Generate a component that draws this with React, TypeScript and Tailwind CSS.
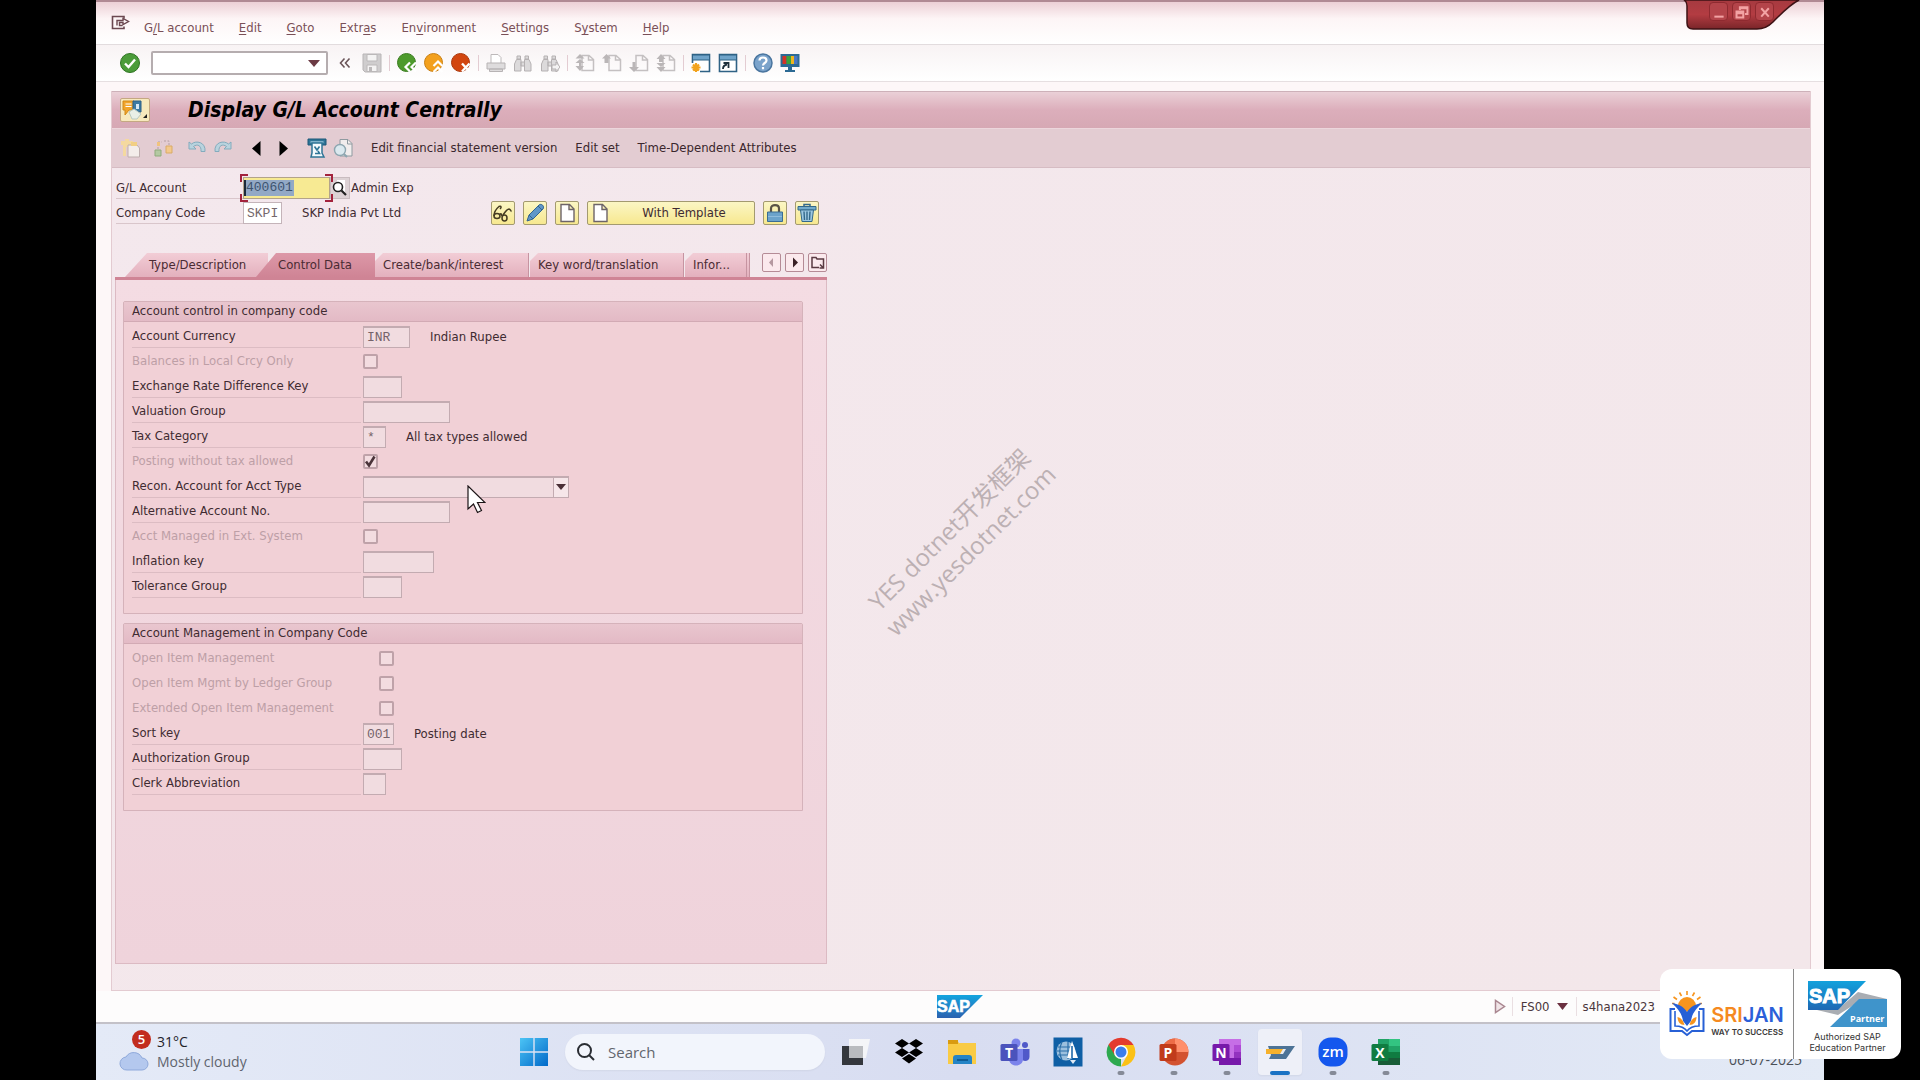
import type { ReactNode } from "react";

type IconProps = { children: ReactNode; size?: number; className?: string };

function Icon({ children, size = 20, className = "" }: IconProps) {
  return (
    <svg aria-hidden="true" className={`shrink-0 ${className}`} width={size} height={size} viewBox="0 0 20 20" fill="none">
      {children}
    </svg>
  );
}

function ToolButton({ label, disabled, children }: { label: string; disabled?: boolean; children: ReactNode }) {
  return (
    <button aria-label={label} className="shrink-0" disabled={disabled} type="button">
      <Icon>{children}</Icon>
    </button>
  );
}

const Separator = () => <span className="h-4 w-px shrink-0 bg-[#e3ccd2]" />;

/* ---------- menu bar ---------- */

const menus: [string, string, string][] = [
  ["G", "/", "L account"],
  ["", "E", "dit"],
  ["", "G", "oto"],
  ["Extr", "a", "s"],
  ["En", "v", "ironment"],
  ["", "S", "ettings"],
  ["S", "y", "stem"],
  ["", "H", "elp"],
];

function MenuBar() {
  return (
    <nav className="flex h-[45px] items-center border-t-2 border-b border-t-[#b08a94] border-b-[#e2dcde] bg-linear-to-b from-[#ecd0d6] via-[#fdf5f6] via-40% to-white pt-2.5 pl-[15px] text-[13px] text-[#7a4f57]">
      <svg aria-hidden="true" className="mb-2.5 mr-[13px] h-4 w-5" viewBox="0 0 20 16" fill="none" stroke="#6b4850" strokeWidth="1.6">
        <path d="M13 3.500V1.500H1.500v12H13v-2" />
        <path d="M6 10.500V5.500h6V3.500l5.500 3-5.500 3V7.500H8.500v3h3" fill="none" strokeWidth="1.400" />
      </svg>
      <div className="flex gap-[25px]">
        {menus.map(([before, key, after]) => (
          <button key={before + key + after} type="button">
            {before}
            <span className="underline underline-offset-2">{key}</span>
            {after}
          </button>
        ))}
      </div>
    </nav>
  );
}

function WindowControls() {
  return (
    <div className="absolute top-0 right-[24px] h-8 w-[117px]">
      <svg aria-hidden="true" className="absolute inset-0" width="117" height="32" viewBox="0 0 117 32">
        <defs>
          <linearGradient id="controls" x1="0" y1="0" x2="0" y2="1">
            <stop offset="0" stopColor="#a63a40" />
            <stop offset="0.5" stopColor="#b33c42" />
            <stop offset="1" stopColor="#7a2529" />
          </linearGradient>
        </defs>
        <path d="M1 0h115c-10 5-18 14-26 22-5 5-9 7-16 7H10c-4 0-6-2-6-6V6c0-3-1-5-3-6z" fill="url(#controls)" stroke="#3d1215" strokeWidth="1.500" />
      </svg>
      <div className="relative flex gap-1 pt-[2px] pl-[26px]">
        {[
          ["Minimize", "M4 15h11"],
          ["Restore", "M3 9h8v7H3zM3 11h8M7 7V4h9v8h-3M7 5h9"],
          ["Close", "M5 5l9 10M14 5l-9 10"],
        ].map(([label, d]) => (
          <button aria-label={label} className="flex h-[19px] w-[19px] items-center justify-center rounded-sm border border-[#8f2a30] bg-[#b4444a]" key={label} type="button">
            <svg className="h-4 w-4" viewBox="0 0 19 19" fill="none" stroke="#f3a3a4" strokeWidth="2.400">
              <path d={d} />
            </svg>
          </button>
        ))}
      </div>
    </div>
  );
}

/* ---------- system toolbar ---------- */

const sheet = <path d="M7 2.500h7l4.500 4V17.500H7zM13.500 2.500V7h5" stroke="#c4c0c1" strokeWidth="1.500" />;
const binoculars = (
  <path d="M4 3h3.500v3H4zM12 3h3.500v3H12zM3.500 6.500h4.500V18H1.500V11zM11.500 6.500H16l2 4.500v7h-6.500zM8 9h3.500v4H8z" fill="#dcdadb" stroke="#b5b1b2" />
);

function SystemToolbar() {
  return (
    <div className="flex h-[37px] items-center gap-[7px] border-b border-[#e6dfe1] bg-linear-to-b from-[#f8f3f4] to-white pl-6">
      <ToolButton label="Enter">
        <circle cx="10" cy="10" r="9.500" fill="#4b9c3a" stroke="#2f7423" />
        <path d="M5 10.500l3.500 3.500L15 6.500" stroke="#fff" strokeWidth="2.400" />
      </ToolButton>
      <div className="ml-1 flex h-6 w-[177px] items-center rounded-xs border-2 border-[#b5adaf] bg-white">
        <input aria-label="Command field" className="h-full w-0 grow outline-none" />
        <button aria-label="Command history" className="px-1.5" type="button">
          <svg width="12" height="7" viewBox="0 0 12 7">
            <path d="M0 0h12L6 7z" fill="#6b3a44" />
          </svg>
        </button>
      </div>
      <button aria-label="Hide command field" className="mx-1" type="button">
        <svg className="h-4 w-3" viewBox="0 0 12 16" fill="none" stroke="#6b5559" strokeWidth="1.600">
          <path d="M5.500 3.500L1.500 8l4 4.500M10.500 3.500L6.500 8l4 4.500" />
        </svg>
      </button>
      <ToolButton disabled label="Save">
        <path d="M1 1h18v18H3l-2-2z" fill="#cfcdce" stroke="#b8b5b6" />
        <path d="M5 1.500h10V8H5zM5 12h10v6.500H5z" fill="#f4f3f3" stroke="#bbb8b9" />
        <path d="M7 14h3v4H7z" fill="#bbb8b9" />
      </ToolButton>
      <Separator />
      <ToolButton label="Back">
        <circle cx="9.500" cy="9.500" r="9" fill="#4d9a2c" stroke="#3c7d22" />
        <path d="M13 9.500L8.500 14l4.500 4.500M19 9.500L14.500 14l4.500 4.500" stroke="#fff" strokeWidth="2.200" />
      </ToolButton>
      <ToolButton label="Exit">
        <circle cx="9.500" cy="9.500" r="9" fill="#f3a01d" stroke="#c97f12" />
        <path d="M9.500 13l4.500-4.500L18.500 13M9.500 19l4.500-4.500L18.500 19" stroke="#fff" strokeWidth="2.200" />
      </ToolButton>
      <ToolButton label="Cancel">
        <circle cx="9.500" cy="9.500" r="9" fill="#d2460f" stroke="#ab380c" />
        <path d="M11 10.500l7.500 8M18.500 10.500l-7.500 8" stroke="#fff" strokeWidth="2.400" />
      </ToolButton>
      <Separator />
      <ToolButton disabled label="Print">
        <path d="M5 10V1.500h7l3 3V10" fill="#fff" stroke="#bdb9ba" />
        <path d="M1 10h18v6H1zM3.500 16h13v2.500h-13z" fill="#dedcdd" stroke="#b7b3b4" />
      </ToolButton>
      <ToolButton disabled label="Find">{binoculars}</ToolButton>
      <ToolButton disabled label="Find next">
        {binoculars}
        <path d="M12 12h4V9l4 5-4 5v-3h-4z" fill="#f4f3f3" stroke="#b5b1b2" />
      </ToolButton>
      <Separator />
      <ToolButton disabled label="First page">
        {sheet}
        <path d="M5 1l4.500 4.500h-9zM5 6l4.500 4h-9zM4 10h2v3h3L5 18l-4.500-5H4z" fill="#bab6b7" />
      </ToolButton>
      <ToolButton disabled label="Previous page">
        {sheet}
        <path d="M4.500 1L9 5.500H6.500V10h-4V5.500H0z" fill="#bab6b7" />
      </ToolButton>
      <ToolButton disabled label="Next page">
        {sheet}
        <path d="M3.500 9h3v5H10l-5 5-5-5h3.500z" fill="#bab6b7" />
      </ToolButton>
      <ToolButton disabled label="Last page">
        {sheet}
        <path d="M5 1l4.500 5H7v3H3V6H.5zM.5 10h9L5 14zM.5 14h9L5 19z" fill="#bab6b7" />
      </ToolButton>
      <Separator />
      <ToolButton label="New session">
        <path d="M1.500 1.500h17v17h-17z" fill="#fff" stroke="#2f6285" strokeWidth="1.600" />
        <path d="M1.500 2h17v5h-17z" fill="#6fa3c9" stroke="#2f6285" />
        <path d="M0 10h9v10H0z" fill="#fff" />
        <path d="M5 10v9M.5 14.500h9M2 11.500l6 6M8 11.500l-6 6" stroke="#f2a21c" strokeWidth="2.200" />
      </ToolButton>
      <ToolButton label="Create shortcut">
        <path d="M1.500 1.500h17v17h-17z" fill="#fff" stroke="#2f6285" strokeWidth="1.600" />
        <path d="M1.500 2h17v5h-17z" fill="#6fa3c9" stroke="#2f6285" />
        <path d="M5 16c0-3 1-4 4-4.500M5.500 10h5v5" stroke="#1d2f3b" strokeWidth="1.800" />
      </ToolButton>
      <Separator />
      <ToolButton label="Help">
        <circle cx="10" cy="10" r="9" fill="#7ba3cb" stroke="#4a759f" strokeWidth="1.500" />
        <path d="M6.500 7.500C6.500 3.500 13.500 3.500 13.500 7.500c0 2.500-3.500 2.500-3.500 5M10 14v2.200" stroke="#fff" strokeWidth="2.200" />
      </ToolButton>
      <ToolButton label="Customize layout">
        <path d="M.5 1h19v13H.5zM8 14h4v3h3v2H5v-2h3z" fill="#2c6a94" />
        <path d="M2.500 3h4v8h-4z" fill="#d43327" />
        <path d="M6.500 3h4.500v8H6.500z" fill="#3ba23c" />
        <path d="M11 3h3v8h-3z" fill="#f0b51f" />
        <path d="M14 3h3.500v8H14z" fill="#4a78c4" />
      </ToolButton>
    </div>
  );
}

/* ---------- application header ---------- */

function TitleBar() {
  return (
    <header className="flex h-[37px] items-center border-t border-[#cdb1b9] bg-linear-to-b from-[#ead0d7] via-[#dcaebb] via-50% to-[#d6a8b4] pl-2">
      <button aria-label="Services for object" className="flex h-6 w-[30px] items-center justify-center rounded-xs border border-[#c4a882] bg-[#f7e9bd]" type="button">
        <svg width="28" height="22" viewBox="0 0 28 22">
          <path d="M2 2h11v9H8l-4 5v-5H2z" fill="#f2a52b" stroke="#d28a17" />
          <path d="M4.500 5h6M4.500 7.500h6" stroke="#fff" />
          <path d="M12 2h8v11h-8z" fill="#3c7aa3" stroke="#2c5f85" />
          <path d="M15 5h3v5h-3z" fill="#d7e8f4" />
          <path d="M8 13l5-3 7 5-4 5h-5z" fill="#e9efe6" stroke="#b9c9c0" />
          <path d="M26 15v4h-4z" fill="#222" />
        </svg>
      </button>
      <h1 className="ml-[38px] text-[21px] leading-6 font-bold italic text-black">Display G/L Account Centrally</h1>
    </header>
  );
}

function ApplicationToolbar() {
  return (
    <div className="flex h-10 items-center gap-1.5 border-t border-b border-t-[#ecd6dc] border-b-[#d6bcc3] bg-[#e3ccd2] pl-[9px] text-[13px] text-[#3a262c]">
      <ToolButton disabled label="Other object">
        <path d="M0 3h4V1h4v2h4v6H5v9H2V7H0z" fill="#f4d9a0" />
        <path d="M7 7h9l2.500 3v9H7z" fill="#f4edea" stroke="#bfaeae" />
        <path d="M10 4h6v4h-6z" fill="#f2cf84" />
      </ToolButton>
      <Separator />
      <ToolButton disabled label="Hierarchy">
        <path d="M1 12h6v6H1z" fill="#b4c9a2" stroke="#8fab7c" />
        <path d="M12 8h6v7h-6z" fill="#f4c98b" stroke="#d9ab66" />
        <path d="M4 11V4h4M10 3h5v4" stroke="#b49fa3" strokeDasharray="2 1.500" />
        <path d="M3 4h3v4H3z" fill="#f0c37e" />
      </ToolButton>
      <Separator />
      <ToolButton disabled label="Undo">
        <path d="M2 4v7h7l-2.500-2.500c4-3 8-1 7.500 5h4C19 4 9 2 4.500 6z" fill="#b9d3de" stroke="#83abbd" />
      </ToolButton>
      <ToolButton disabled label="Redo">
        <path d="M18 4v7h-7l2.500-2.500c-4-3-8-1-7.500 5H2C1 4 11 2 15.500 6z" fill="#b9d3de" stroke="#83abbd" />
      </ToolButton>
      <Separator />
      <button aria-label="Previous account" className="flex w-[21px] justify-center" type="button">
        <svg width="9" height="15" viewBox="0 0 9 15"><path d="M8.500 0v15L0 7.500z" /></svg>
      </button>
      <button aria-label="Next account" className="flex w-[21px] justify-center" type="button">
        <svg width="9" height="15" viewBox="0 0 9 15"><path d="M.5 0v15L9 7.500z" /></svg>
      </button>
      <Separator />
      <ToolButton label="Change documents">
        <path d="M1 1h18v6H1z" fill="#2f7597" stroke="#1d5878" />
        <path d="M3.500 4h13" stroke="#9cc7dc" strokeWidth="1.500" />
        <path d="M5 5h10v10l2 4H4l1-4z" fill="#f4fafd" stroke="#2f7597" strokeWidth="1.500" />
        <path d="M7.500 8.500L10 12l2.500-3.500M8 15.500h4.500l-1.500-2.500" stroke="#2f7597" strokeWidth="1.600" />
      </ToolButton>
      <ToolButton label="Where-used list">
        <path d="M7 1.500h8l4 4V18H7z" fill="#f1eded" stroke="#8f9aa0" />
        <path d="M14.500 1.500V6H19" stroke="#8f9aa0" />
        <circle cx="7" cy="12" r="5.500" fill="#dbe9ef" stroke="#8da6b0" strokeWidth="1.400" />
        <path d="M11 16l3 3" stroke="#8da6b0" strokeWidth="2" />
      </ToolButton>
      <div className="ml-3 flex gap-[18px]">
        <button type="button">Edit financial statement version</button>
        <button type="button">Edit set</button>
        <button type="button">Time-Dependent Attributes</button>
      </div>
    </div>
  );
}

/* ---------- account selection ---------- */

const yellowButton = "flex h-6 items-center rounded-xs border border-[#a39a70] bg-linear-to-b from-[#fbf6c4] to-[#f7e88f]";

const page = <path d="M4 1.500h8.500L17 6v12.500H4zM12 1.500V6.500h5" fill="#fff" stroke="#6d6468" strokeWidth="1.400" />;

function AccountSelection() {
  return (
    <section className="flex pt-[9px] pl-1 text-[13px] text-[#3f2b31]">
      <div className="w-[375px]">
        <div className="flex h-[25px] items-start">
          <label className="h-[22px] w-[127px] border-b border-[#d9c6cb] leading-[22px]" htmlFor="gl">G/L Account</label>
          <div className="relative flex h-[22px] w-[87px] items-center border border-[#b3a38a] bg-[#f7ea93]">
            <input
              className="w-[50px] border-l-2 border-[#1c2a3a] bg-[#93a9c6] font-['Liberation_Mono',monospace] leading-4 text-[#3d5470] outline-none"
              defaultValue="400601"
              id="gl"
            />
            <span className="absolute -top-1 -left-1 h-2 w-2 border-t-2 border-l-2 border-[#a3233d]" />
            <span className="absolute -bottom-1 -left-1 h-2 w-2 border-b-2 border-l-2 border-[#a3233d]" />
            <span className="absolute -top-1 -right-1 h-2 w-2 border-t-2 border-r-2 border-[#a3233d]" />
            <span className="absolute -right-1 -bottom-1 h-2 w-2 border-r-2 border-b-2 border-[#a3233d]" />
          </div>
          <button aria-label="Search help" className="flex h-[22px] w-[20px] items-center justify-center border border-[#c9bcc0] bg-[#ddd2d5]" type="button">
            <svg width="18" height="18" viewBox="0 0 18 18" fill="none">
              <path d="M6 1h8v12H6z" fill="#fff" />
              <circle cx="7" cy="8" r="4.500" fill="#fff" stroke="#222" strokeWidth="1.600" />
              <path d="M10.500 11.500L15 16" stroke="#222" strokeWidth="2.200" />
            </svg>
          </button>
          <span className="ml-px leading-[22px]">Admin Exp</span>
        </div>
        <div className="flex h-[25px] items-start">
          <label className="h-[22px] w-[127px] border-b border-[#d9c6cb] leading-[22px]" htmlFor="company">Company Code</label>
          <input
            className="h-[22px] w-[39px] border border-[#c4b4b9] bg-white px-[3px] font-['Liberation_Mono',monospace] text-[#75686c]"
            defaultValue="SKPI"
            id="company"
            readOnly
          />
          <span className="ml-[20px] leading-[22px]">SKP India Pvt Ltd</span>
        </div>
      </div>
      <div className="flex items-end gap-2 pb-0.5">
        <button aria-label="Display" className={`${yellowButton} w-6 justify-center`} type="button">
          <Icon>
            <path d="M1 13C1 8 3 6 6 3.500 8 2.500 9 4.500 7 6" stroke="#453c22" strokeWidth="1.500" />
            <path d="M10 12c2-3 4-6 6-6 2 .5 1.500 2 2.500 2.500" stroke="#453c22" strokeWidth="1.500" />
            <ellipse cx="4" cy="13" rx="3" ry="2.500" stroke="#453c22" strokeWidth="1.500" />
            <ellipse cx="11.500" cy="15" rx="2.500" ry="3" stroke="#453c22" strokeWidth="1.500" />
            <path d="M6.500 12c1-2 2-1.500 2.500 1" stroke="#453c22" strokeWidth="1.500" />
          </Icon>
        </button>
        <button aria-label="Change" className={`${yellowButton} w-6 justify-center`} type="button">
          <Icon>
            <path d="M2 18l2-6L14 2c2-2 6 1 4 4L8 16z" fill="#5f96c8" stroke="#33648f" />
            <path d="M4 12l4 4M13 3l4 4" stroke="#33648f" />
          </Icon>
        </button>
        <button aria-label="Create" className={`${yellowButton} w-6 justify-center`} type="button">
          <Icon>{page}</Icon>
        </button>
        <button className={`${yellowButton} w-[168px] pl-0.5`} type="button">
          <Icon>{page}</Icon>
          <span className="grow pl-1 text-center">With Template</span>
        </button>
        <button aria-label="Lock" className={`${yellowButton} w-6 justify-center`} type="button">
          <Icon>
            <path d="M6 9V5.500C6 1 14 1 14 5.500V9" stroke="#5a5346" strokeWidth="2.200" />
            <path d="M2.500 9h15v9.500h-15z" fill="#6ba3cb" stroke="#3a6d94" />
            <path d="M3 13.500h14" stroke="#8fbcdc" />
          </Icon>
        </button>
        <button aria-label="Delete" className={`${yellowButton} w-6 justify-center`} type="button">
          <Icon>
            <path d="M7 3V1.500h6V3" stroke="#32688a" strokeWidth="1.500" />
            <path d="M1 3.500h18V7H1z" fill="#72abcb" stroke="#32688a" />
            <path d="M3.500 7h13l-1.500 11.500H5z" fill="#9dc8e2" stroke="#32688a" />
            <path d="M7 8.500l.5 8.500M10 8.500V17M13 8.500l-.5 8.500" stroke="#32688a" strokeWidth="1.400" />
          </Icon>
        </button>
      </div>
    </section>
  );
}

/* ---------- tab strip ---------- */

const tabBase = "flex h-6 items-center pb-px whitespace-nowrap";
const tabIdle = "bg-linear-to-b from-[#f2cdd6] to-[#e3b0bd]";

function TabStrip() {
  return (
    <div className="flex items-start border-b-3 border-[#cf8495] text-[13px] text-[#4a2b33]" role="tablist">
      <button className={`${tabBase} ${tabIdle} ml-[10px] -mr-3 w-[143px] pl-6 [clip-path:polygon(22px_0,100%_0,100%_100%,0_100%)]`} role="tab" type="button">
        Type/Description
      </button>
      <button
        aria-selected="true"
        className={`${tabBase} z-10 w-[119px] bg-linear-to-b from-[#dd98a8] to-[#cf8495] pl-[22px] [clip-path:polygon(20px_0,100%_0,100%_100%,0_100%)]`}
        role="tab"
        type="button"
      >
        Control Data
      </button>
      <button className={`${tabBase} ${tabIdle} w-[154px] border-r border-[#c694a1] pl-2 [clip-path:polygon(8px_0,100%_0,100%_100%,0_100%,0_8px)]`} role="tab" type="button">
        Create/bank/interest
      </button>
      <button className={`${tabBase} ${tabIdle} ml-px w-[154px] border-r border-[#c694a1] pl-2 [clip-path:polygon(8px_0,100%_0,100%_100%,0_100%,0_8px)]`} role="tab" type="button">
        Key word/translation
      </button>
      <button className={`${tabBase} ${tabIdle} ml-px w-[65px] border-r-4 border-double border-[#c694a1] pl-2 [clip-path:polygon(8px_0,100%_0,100%_100%,0_100%,0_8px)]`} role="tab" type="button">
        Infor...
      </button>
      <div className="ml-auto flex gap-1">
        {[
          ["Scroll tabs left", "M10 4v9L6 8.500z", "fill-[#b598a0] stroke-none"],
          ["Scroll tabs right", "M7 3.500v10l5-5z", "fill-[#3a2026] stroke-none"],
          ["Tab list", "M10 13.500H3v-10h4l1 1.500h6.500v5M11 10.500l3 3M14.500 10v4h-4", "fill-none stroke-[#5a3a42]"],
        ].map(([label, d, paint]) => (
          <button aria-label={label} className="h-[19px] w-[19px] rounded-xs border border-[#b58b96] bg-[#fbe9ed]" key={label} type="button">
            <svg className={paint} width="17" height="17" viewBox="0 0 17 17" strokeWidth="1.500">
              <path d={d} />
            </svg>
          </button>
        ))}
      </div>
    </div>
  );
}

/* ---------- field groups ---------- */

type Field = {
  label: string;
  kind?: "text" | "check" | "select";
  width?: string;
  value?: string;
  checked?: boolean;
  indent?: boolean;
  note?: string;
};

const controlFields: Field[] = [
  { label: "Account Currency", width: "w-[47px]", value: "INR", note: "Indian Rupee" },
  { label: "Balances in Local Crcy Only", kind: "check" },
  { label: "Exchange Rate Difference Key", width: "w-[39px]" },
  { label: "Valuation Group", width: "w-[87px]" },
  { label: "Tax Category", width: "w-[23px]", value: "*", note: "All tax types allowed" },
  { label: "Posting without tax allowed", kind: "check", checked: true },
  { label: "Recon. Account for Acct Type", kind: "select" },
  { label: "Alternative Account No.", width: "w-[87px]" },
  { label: "Acct Managed in Ext. System", kind: "check" },
  { label: "Inflation key", width: "w-[71px]" },
  { label: "Tolerance Group", width: "w-[39px]" },
];

const managementFields: Field[] = [
  { label: "Open Item Management", kind: "check", indent: true },
  { label: "Open Item Mgmt by Ledger Group", kind: "check", indent: true },
  { label: "Extended Open Item Management", kind: "check", indent: true },
  { label: "Sort key", width: "w-[31px]", value: "001", note: "Posting date" },
  { label: "Authorization Group", width: "w-[39px]" },
  { label: "Clerk Abbreviation", width: "w-[23px]" },
];

function FieldRow({ field }: { field: Field }) {
  const id = field.label.toLowerCase().replace(/[^a-z]+/g, "-");
  const isCheck = field.kind === "check";

  return (
    <div className="flex h-[25px] items-center">
      <label
        className={`mr-0.5 h-[23px] w-[229px] leading-[22px] ${isCheck ? "text-[#bd9fa6]" : "border-b border-[#dcbcc3]"}`}
        htmlFor={id}
      >
        {field.label}
      </label>
      {isCheck ? (
        <span className={`relative h-[15px] w-[15px] ${field.indent ? "ml-4" : ""}`}>
          <input
            className="block h-[15px] w-[15px] appearance-none rounded-xs border-2 border-[#bfa2a9] bg-[#f3dce0]"
            defaultChecked={field.checked}
            disabled
            id={id}
            type="checkbox"
          />
          {field.checked && (
            <svg aria-hidden="true" className="absolute inset-0" width="15" height="15" viewBox="0 0 15 15" fill="none" stroke="#4a3339" strokeWidth="2.600">
              <path d="M3 7.500l3 4 5.500-9" />
            </svg>
          )}
        </span>
      ) : field.kind === "select" ? (
        <span className="relative flex h-[22px] w-[206px]">
          <select className="w-full appearance-none border border-t-2 border-[#c3abb1] bg-[#f1dce0]" id={id}>
            <option> </option>
          </select>
          <span className="pointer-events-none absolute top-0.5 right-px flex h-[19px] w-[15px] items-center justify-center border-l border-[#c3abb1] bg-[#f6e6e9]">
            <svg aria-hidden="true" width="10" height="6" viewBox="0 0 10 6"><path d="M0 0h10L5 6z" fill="#4a2f36" /></svg>
          </span>
        </span>
      ) : (
        <input
          className={`h-[22px] border border-t-2 border-[#c3abb1] bg-[#f1dce0] px-[3px] font-['Liberation_Mono',monospace] text-[#75636a] ${field.width}`}
          defaultValue={field.value}
          id={id}
          readOnly
        />
      )}
      {field.note && <span className="ml-5">{field.note}</span>}
    </div>
  );
}

function FieldGroup({ title, fields }: { title: string; fields: Field[] }) {
  return (
    <section className="rounded-t-xs border border-[#d5b2ba] bg-[#f1d0d6] pb-[14px] text-[13px] text-[#3f2b31]">
      <h2 className="h-5 border-b border-[#d2aab4] bg-linear-to-b from-[#e9c6cf] to-[#e3bac5] pl-2 leading-[18px]">{title}</h2>
      <div className="pt-[2px] pl-2">
        {fields.map((field) => (
          <FieldRow field={field} key={field.label} />
        ))}
      </div>
    </section>
  );
}

/* ---------- status bar ---------- */

function SapLogo({ id, width, height }: { id: string; width: number; height: number }) {
  return (
    <svg aria-label="SAP" role="img" width={width} height={height} viewBox="0 0 46 23">
      <defs>
        <linearGradient id={id} x1="0" y1="0" x2="0" y2="1">
          <stop offset="0" stopColor="#14a5df" />
          <stop offset="1" stopColor="#2c62b0" />
        </linearGradient>
      </defs>
      <path d="M0 0h46L23 23H0z" fill={`url(#${id})`} />
      <text x="0" y="17" fill="#fff" stroke="#fff" strokeWidth="0.600" className="font-['Liberation_Sans',sans-serif] text-[16px] font-bold">SAP</text>
    </svg>
  );
}

function StatusBar() {
  return (
    <footer className="flex h-[33px] items-center border-b-2 border-[#c3c1c8] bg-[#fdfcfc] text-[13px] text-[#4a363b]">
      <div className="flex-1" />
      <SapLogo height={23} id="sap-status" width={46} />
      <div className="flex flex-1 justify-end">
        <div className="mr-[169px] flex items-center">
          <svg aria-hidden="true" className="mr-1.5" width="12" height="15" viewBox="0 0 12 15"><path d="M1.500 1.500v12l9-6z" fill="#f0e4e7" stroke="#a98690" strokeWidth="1.500" /></svg>
          <button className="flex items-center gap-[7px] border-x border-[#eadfe2] px-2" type="button">
            FS00
            <svg width="11" height="7" viewBox="0 0 11 7"><path d="M0 0h11L5.500 7z" fill="#6b3040" /></svg>
          </button>
          <span className="pl-1.5">s4hana2023</span>
        </div>
      </div>
    </footer>
  );
}

/* ---------- taskbar ---------- */

function OfficeTile({ letter, tile, children }: { letter: string; tile: string; children: ReactNode }) {
  return (
    <svg width="30" height="30" viewBox="0 0 30 30">
      {children}
      <rect x="0.500" y="7" width="17" height="17" rx="1.500" fill={tile} />
      <text x="9" y="20.500" textAnchor="middle" fill="#fff" className="text-[14px] font-bold">{letter}</text>
    </svg>
  );
}

const apps: { name: string; state?: "open" | "active"; icon: ReactNode }[] = [
  {
    name: "Task view",
    icon: (
      <svg width="30" height="30" viewBox="0 0 30 30">
        <path d="M1 9h21v19H1z" fill="#34373d" />
        <path d="M8 2h21l-4 19H8z" fill="#f4f5f8" />
        <path d="M8 9h14v12H8z" fill="#b9bbbf" />
      </svg>
    ),
  },
  {
    name: "Dropbox",
    icon: (
      <svg width="30" height="30" viewBox="0 0 30 30">
        <path d="M8 2l7 4.500L8 11 1 6.500zM22 2l7 4.500-7 4.500-7-4.500zM8 11l7 4.500L8 20l-7-4.500zM22 11l7 4.500-7 4.500-7-4.500zM15 17l7 4.500-7 5-7-5z" />
      </svg>
    ),
  },
  {
    name: "File Explorer",
    icon: (
      <svg width="30" height="30" viewBox="0 0 30 30">
        <path d="M1 3h9l2 3h17v21H1z" fill="#f9cb45" />
        <path d="M1 3h10v4H1z" fill="#d99b10" />
        <path d="M6 27v-6c0-2 1-3 3-3h13c2 0 3 1 3 3v6z" fill="#2484c6" />
        <path d="M10 23h11" stroke="#0e5c95" strokeWidth="2" />
      </svg>
    ),
  },
  {
    name: "Teams",
    icon: (
      <OfficeTile letter="T" tile="#4b53bc">
        <circle cx="16" cy="6" r="4.500" fill="#7b83eb" />
        <circle cx="25" cy="8" r="3" fill="#5059c9" />
        <path d="M20 12h9.500v8c0 4-5 5-7 3z" fill="#5059c9" />
        <path d="M9 12h14v10c0 8-12 9-14 1z" fill="#7b83eb" />
      </OfficeTile>
    ),
  },
  {
    name: "Globe viewer",
    icon: (
      <svg width="30" height="30" viewBox="0 0 30 30" fill="none">
        <path d="M.5.500h29v29H.5z" fill="#0f5fa5" />
        <circle cx="13" cy="14" r="9.500" fill="#9cc0de" />
        <path d="M5 10h14M3.500 14h15M5 18h13M9 5c-3 6-3 12 0 18M15 5v17" stroke="#2a6ea8" strokeWidth="1.200" />
        <path d="M19 4l6 17H14z" fill="#fff" />
        <path d="M19 9v12" stroke="#0f5fa5" strokeWidth="1.500" />
        <path d="M17 23h6l-3 4z" fill="#dfeaf4" />
      </svg>
    ),
  },
  {
    name: "Chrome",
    state: "open",
    icon: (
      <svg width="30" height="30" viewBox="0 0 30 30">
        <path d="M15 15v14.500A14.500 14.500 0 0 1 2.500 7.800z" fill="#2da94f" />
        <path d="M15 8h12.600A14.500 14.500 0 0 0 2.500 7.800L9 18.500z" fill="#e33b2e" />
        <path d="M21 18.500L15 29.500A14.500 14.500 0 0 0 27.600 8H15z" fill="#fbc116" />
        <circle cx="15" cy="15" r="7" fill="#fff" />
        <circle cx="15" cy="15" r="5.500" fill="#3b7ded" />
      </svg>
    ),
  },
  {
    name: "PowerPoint",
    state: "open",
    icon: (
      <OfficeTile letter="P" tile="#c13b1b">
        <circle cx="16" cy="15" r="13.500" fill="#d35230" />
        <path d="M16 1.500A13.500 13.500 0 0 1 29.500 15H16z" fill="#ff8f6b" />
        <path d="M16 1.500V15H2.500A13.500 13.500 0 0 1 16 1.500z" fill="#ed6c47" />
      </OfficeTile>
    ),
  },
  {
    name: "OneNote",
    state: "open",
    icon: (
      <OfficeTile letter="N" tile="#7719aa">
        <path d="M7 2h22v26H7z" fill="#c66ee6" />
        <path d="M22 8h7v7h-7z" fill="#ae4bd5" />
        <path d="M22 15h7v6h-7z" fill="#9332bf" />
        <path d="M7 21h22v7H7z" fill="#7719aa" />
      </OfficeTile>
    ),
  },
  {
    name: "SAP Logon",
    state: "active",
    icon: (
      <svg width="30" height="30" viewBox="0 0 30 30">
        <path d="M3 9h27l-9 13H4l2-4z" fill="#4d7396" />
        <path d="M9 12h12l-3 5H9z" fill="#e9ecf2" />
        <path d="M1 12h17l-3 5H1z" fill="#f6b12c" />
      </svg>
    ),
  },
  {
    name: "Zoom",
    state: "open",
    icon: (
      <svg width="30" height="30" viewBox="0 0 30 30">
        <rect x="0.500" y="0.500" width="29" height="29" rx="12" fill="#1457ee" />
        <text x="15" y="20" textAnchor="middle" fill="#fff" className="text-[15px] font-semibold">zm</text>
      </svg>
    ),
  },
  {
    name: "Excel",
    state: "open",
    icon: (
      <OfficeTile letter="X" tile="#107c41">
        <path d="M7 2h22v26H7z" fill="#21a366" />
        <path d="M18 2h11v7H18z" fill="#33c481" />
        <path d="M7 15h22v7H7z" fill="#107c41" />
        <path d="M7 21h22v7H7z" fill="#185c37" />
      </OfficeTile>
    ),
  },
];

function Taskbar() {
  return (
    <div className="flex h-14 items-center bg-linear-to-r from-[#e4eaf7] via-[#d8ddf1] to-[#e3eaf6] pb-px font-['Open_Sans',sans-serif] text-[14px] leading-5">
      <div className="flex-1 pl-[22px]">
        <button className="flex text-left" type="button">
          <span className="relative h-10 w-[39px]">
            <svg className="absolute top-[18px] left-px" width="31" height="22" viewBox="0 0 31 22">
              <path d="M8 20a6.500 6.500 0 0 1-1-13A9 9 0 0 1 23 8a6 6 0 0 1 0 12z" fill="#b4c8ee" stroke="#8fa9db" />
            </svg>
            <span className="absolute -top-0.5 left-[14px] h-[19px] w-[19px] rounded-full bg-[#c22c1e] text-center text-[13px] leading-[19px] font-semibold text-white">5</span>
          </span>
          <span className="flex flex-col text-[#1f2329]">
            <span>31°C</span>
            <span className="text-[#5f656e]">Mostly cloudy</span>
          </span>
        </button>
      </div>
      <div className="flex items-center">
        <button aria-label="Start" className="mr-[9px] flex w-11 justify-center" type="button">
          <svg width="28" height="28" viewBox="0 0 28 28">
            <defs>
              <linearGradient id="start" x1="0" y1="0" x2="1" y2="1">
                <stop offset="0" stopColor="#4cc4f5" />
                <stop offset="1" stopColor="#0169c9" />
              </linearGradient>
            </defs>
            <path d="M0 0h13.300v13.300H0zM14.700 0H28v13.300H14.700zM0 14.700h13.300V28H0zM14.700 14.700H28V28H14.700z" fill="url(#start)" />
          </svg>
        </button>
        <label className="mr-[9px] flex h-9 w-[260px] items-center rounded-full bg-[#f2f5fc] pl-3 shadow-xs">
          <svg aria-hidden="true" width="18" height="18" viewBox="0 0 18 18" fill="none" stroke="#2a2d33" strokeWidth="2">
            <circle cx="7.500" cy="7.500" r="6.500" />
            <path d="M12 12l5 5" />
          </svg>
          <input aria-label="Search" className="ml-[13px] w-0 grow text-[15px] outline-none placeholder:text-[#62666e]" placeholder="Search" />
        </label>
        <div className="flex gap-[9px]">
          {apps.map(({ name, state, icon }) => (
            <button
              aria-label={name}
              className={`relative flex h-[46px] w-11 items-center justify-center rounded-sm ${state === "active" ? "bg-[#eef0f8] shadow-xs" : ""}`}
              key={name}
              type="button"
            >
              {icon}
              {state && (
                <span
                  className={`absolute bottom-0 left-1/2 h-1 -translate-x-1/2 rounded-full ${state === "active" ? "w-5 bg-[#1a72c4]" : "w-[7px] bg-[#858a97]"}`}
                />
              )}
            </button>
          ))}
        </div>
      </div>
      <div className="flex flex-1 flex-col items-end pt-4 pr-[22px] text-[#4a4f57]">06-07-2025</div>
    </div>
  );
}

/* ---------- overlays ---------- */

function PartnerBadge() {
  return (
    <aside className="absolute right-[19px] bottom-[21px] flex h-[90px] w-[241px] rounded-xl bg-white">
      <div className="flex w-[134px] items-center justify-center gap-1.5 border-r border-[#8a8a8a]">
        <svg aria-hidden="true" width="36" height="46" viewBox="0 0 36 46" fill="none">
          <path d="M9 15a9 9 0 0 1 18 0l-9 6z" fill="#f7941d" />
          <path d="M18 4V0M12.500 5l-2-3.500M23.500 5l2-3.500M8 8.500L4.500 6M28 8.500L31.500 6M5.500 12.500H3M30.500 12.500H33" stroke="#f7941d" strokeWidth="1.600" />
          <path d="M3 12c7 1 12 4 15 9 3-5 8-8 15-9-5 5-10 10-11 18l-4 5-4-5C13 22 8 17 3 12z" fill="#2760d6" />
          <path d="M6 18H1.500v22H13l5 4 5-4h11.500V18H30" stroke="#2760d6" strokeWidth="2" />
          <path d="M6 20v15c5 0 9 1 12 5 3-4 7-5 12-5V20" stroke="#2760d6" strokeWidth="1.600" />
          <path d="M8.500 26c4 1 6 4 7 8-4 0-7-3-7-8zM27.500 26c-4 1-6 4-7 8 4 0 7-3 7-8z" fill="#f7941d" />
        </svg>
        <div className="pt-3">
          <p className="font-['Inter',sans-serif] text-[20px] leading-6 font-semibold text-[#2b5fd9]">
            <span className="text-[#f58a1f]">SRI</span>JAN
          </p>
          <p className="font-['Inter',sans-serif] text-[8px] leading-[10px] font-semibold text-[#3a3a3a]">WAY TO SUCCESS</p>
        </div>
      </div>
      <div className="flex flex-1 flex-col items-center pt-3">
        <svg aria-label="SAP Partner" role="img" width="80" height="46" viewBox="0 0 80 46">
          <defs>
            <linearGradient id="sap-badge" x1="0" y1="0" x2="0" y2="1">
              <stop offset="0" stopColor="#12a1dc" />
              <stop offset="1" stopColor="#1d68b4" />
            </linearGradient>
          </defs>
          <path d="M50 11l29 7H55L30 34 9 29h20z" fill="#a9adb3" />
          <path d="M0 0h58L30 29H0z" fill="url(#sap-badge)" />
          <path d="M51 18h28v28H22z" fill="#3f94cb" />
          <text x="1" y="22" fill="#fff" stroke="#fff" className="font-['Liberation_Sans',sans-serif] text-[20px] font-bold">SAP</text>
          <text x="42" y="41" fill="#fff" className="font-['Open_Sans',sans-serif] text-[9px] font-bold">Partner</text>
        </svg>
        <p className="pt-1 text-center font-['Inter',sans-serif] text-[9px] leading-[11px] text-[#333]">
          Authorized SAP
          <br />
          Education Partner
        </p>
      </div>
    </aside>
  );
}

function Watermark() {
  return (
    <div className="pointer-events-none absolute inset-0 flex items-center justify-center">
      <p className="-rotate-45 text-center font-['Open_Sans','Noto_Sans_CJK_SC',sans-serif] text-[24px] leading-[30px] text-[#bcb0b3]">
        YES dotnet开发框架
        <br />
        www.yesdotnet.com
      </p>
    </div>
  );
}

function MousePointer() {
  return (
    <svg aria-hidden="true" className="pointer-events-none absolute top-[205px] left-[351px]" width="19" height="29" viewBox="0 0 19 29">
      <path d="M1 1v23l5.500-5 4 8.500 4-2-4-8H18z" fill="#fff" stroke="#1c1416" strokeWidth="1.200" />
    </svg>
  );
}

export default function App() {
  return (
    <div className="relative min-h-screen overflow-hidden bg-black font-['DejaVu_Sans_Condensed','DejaVu_Sans',sans-serif]">
      <main className="relative mx-24 flex min-h-screen flex-col bg-[#fdf7f8]">
        <MenuBar />
        <WindowControls />
        <SystemToolbar />
        <div className="mt-[9px] mr-[13px] ml-[15px] flex grow flex-col border-x border-b border-[#e3cbd1] bg-linear-to-br from-[#f4e8ed] to-[#f3e7ea]">
          <TitleBar />
          <ApplicationToolbar />
          <AccountSelection />
          <div className="mt-[26px] ml-[3px] flex w-[712px] grow flex-col">
            <TabStrip />
            <div className="relative flex grow flex-col gap-[9px] border border-t-0 border-[#dcbac3] bg-linear-to-b from-[#f4dce3] to-[#efd3db] px-[7px] pr-[23px] pt-[21px]">
              <FieldGroup fields={controlFields} title="Account control in company code" />
              <FieldGroup fields={managementFields} title="Account Management in Company Code" />
              <MousePointer />
            </div>
          </div>
          <div className="h-[26px]" />
        </div>
        <StatusBar />
        <Taskbar />
      </main>
      <Watermark />
      <PartnerBadge />
    </div>
  );
}
